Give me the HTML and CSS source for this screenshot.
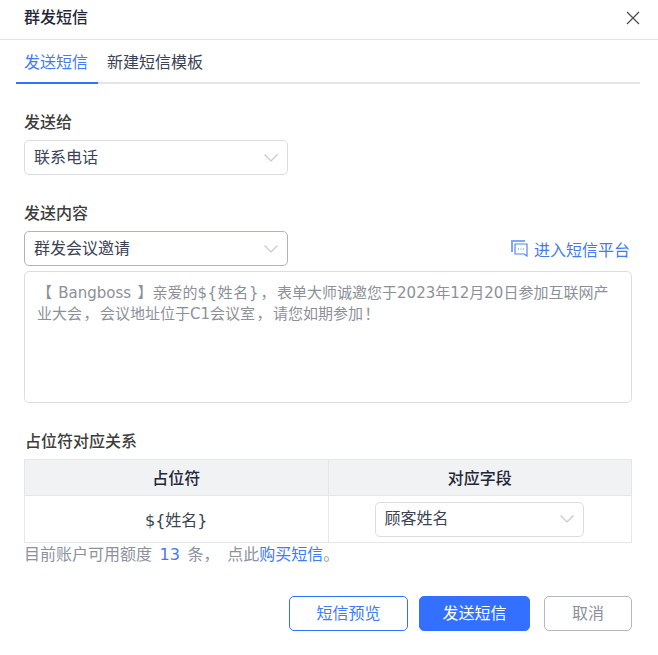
FILE: index.html
```html
<!DOCTYPE html>
<html lang="zh-CN">
<head>
    <meta charset="UTF-8">
    <title>群发短信</title>
    <link rel="stylesheet" href="styles.css">
</head>
<body>
    <div class="modal">
        <div class="modal-header">
            <span class="modal-title">群发短信</span>
            <svg class="close-icon" width="14" height="14" viewBox="0 0 14 14"><path d="M1 1l12 12M13 1L1 13" fill="none" stroke="#4a4a4a" stroke-width="1.2"/></svg>
        </div>
        <div class="tabs">
            <div class="tab active">发送短信</div>
            <div class="tab">新建短信模板</div>
        </div>
        <div class="form">
            <div class="label first-label">发送给</div>
            <div class="select select-short">
                <span>联系电话</span>
                <svg class="chevron" width="14" height="8" viewBox="0 0 14 8"><path d="M.5.5L7 7l6.5-6.5" fill="none" stroke="#c5c8ce" stroke-width="1.2"/></svg>
            </div>
            <div class="label content-label">发送内容</div>
            <div class="content-row">
                <div class="select select-short select-focus">
                    <span>群发会议邀请</span>
                    <svg class="chevron" width="14" height="8" viewBox="0 0 14 8"><path d="M.5.5L7 7l6.5-6.5" fill="none" stroke="#c5c8ce" stroke-width="1.2"/></svg>
                </div>
                <a class="platform-link">
                    <svg width="17" height="17" viewBox="0 0 17 17"><path d="M1 12V1h13" fill="none" stroke="#7ea6fb" stroke-width="2"/><path d="M4 4h12v12l-3-2H4z" fill="#fff" stroke="#4f86f7" stroke-width="1.2"/><path d="M7 9h1M9.5 9h1M12 9h1" stroke="#4f86f7" stroke-width="1"/></svg>
                    <span>进入短信平台</span>
                </a>
            </div>
            <div class="textarea">
                <div>【 Bangboss 】亲爱的<span class="var">${姓名}</span><span class="punct">，</span>表单大师诚邀您于2023年12月20日参加互联网产</div>
                <div>业大会<span class="punct">，</span>会议地址位于C1会议室<span class="punct">，</span>请您如期参加<span class="punct">！</span></div>
            </div>
            <div class="label table-label">占位符对应关系</div>
            <table class="map-table">
                <tr>
                    <th>占位符</th>
                    <th>对应字段</th>
                </tr>
                <tr>
                    <td>${姓名}</td>
                    <td>
                        <div class="select select-cell">
                            <span>顾客姓名</span>
                            <svg class="chevron" width="14" height="8" viewBox="0 0 14 8"><path d="M.5.5L7 7l6.5-6.5" fill="none" stroke="#c5c8ce" stroke-width="1.2"/></svg>
                        </div>
                    </td>
                </tr>
            </table>
            <div class="quota">目前账户可用额度 <span class="blue">13</span> 条<span class="punct">，</span> 点此<span class="blue">购买短信</span>。</div>
            <div class="actions">
                <button class="btn btn-outline">短信预览</button>
                <button class="btn btn-primary">发送短信</button>
                <button class="btn btn-cancel">取消</button>
            </div>
        </div>
    </div>
</body>
</html>
```

FILE: styles.css
```css
* {
    box-sizing: border-box;
}
body {
    margin: 0;
    background: #fff;
    font-family: "DejaVu Sans", "Noto Sans CJK SC", sans-serif;
    font-size: 16px;
    color: #3a4254;
}
.modal {
    width: 658px;
    height: 655px;
}
.modal-header {
    height: 40px;
    padding: 0 18px 4px 24px;
    border-bottom: 1px solid #e2e3e6;
    display: flex;
    align-items: center;
    justify-content: space-between;
}
.modal-title {
    margin-bottom: 3px;
    font-weight: 500;
    color: #1f2739;
}
.tabs {
    margin: 0 18px 0 16px;
    height: 44px;
    border-bottom: 2px solid #e4e5ec;
    display: flex;
}
.tab {
    padding: 0 8px;
    margin-right: 1px;
    height: 44px;
    line-height: 46px;
}
.tab.active {
    width: 82px;
    color: #3f7bf8;
    border-bottom: 2px solid #3370ff;
    margin-right: 1px;
}
.form {
    padding: 0 26px 0 24px;
}
.label {
    height: 22px;
    line-height: 24px;
    font-weight: 500;
    color: #3d3d3d;
    margin-bottom: 7px;
}
.first-label {
    margin-top: 27px;
}
.content-label {
    margin-top: 27px;
}
.table-label {
    margin-top: 27px;
    padding-left: 1px;
}
.select {
    height: 35px;
    border: 1px solid #dcdde1;
    border-radius: 5px;
    padding: 0 9px 4px;
    display: flex;
    align-items: center;
    justify-content: space-between;
}
.select-short {
    width: 264px;
}
.select-focus {
    border-color: #b1b3bd;
}
.select-cell {
    width: 209px;
    margin-left: 46px;
    text-align: left;
}
.chevron {
    margin-top: 4px;
}
.content-row {
    display: flex;
    justify-content: space-between;
    align-items: center;
}
.platform-link {
    display: flex;
    align-items: center;
    gap: 6px;
    color: #3f7bf8;
    margin-right: 2px;
}
.textarea {
    margin-top: 5px;
    height: 132px;
    border: 1px solid #dcdde1;
    border-radius: 5px;
    padding: 11px 12px;
    font-size: 15px;
    line-height: 21px;
    word-spacing: 1.5px;
    color: #8d9098;
}
.var {
    letter-spacing: .6px;
}
.punct {
    font-family: "DejaVu Sans", "Noto Sans CJK TC", sans-serif;
}
.textarea .punct {
    margin: 0 1.5px;
}
.map-table {
    width: 608px;
    border-collapse: collapse;
    table-layout: fixed;
}
.map-table th, .map-table td {
    border: 1px solid #e5e6e9;
    text-align: center;
    padding: 0;
}
.map-table th {
    height: 36px;
    padding-bottom: 2px;
    background: #f1f2f4;
    font-weight: 500;
    color: #1f2739;
}
.map-table td {
    height: 47px;
}
.quota {
    margin-top: 1px;
    line-height: 22px;
    word-spacing: 2.5px;
    color: #8c919d;
}
.blue {
    color: #3f7bf8;
}
.actions {
    margin-top: 30px;
    display: flex;
    justify-content: flex-end;
}
.btn {
    height: 35px;
    border-radius: 5px;
    font: inherit;
    padding: 0 0 4px;
}
.btn-outline {
    width: 119px;
    margin-right: 11px;
    background: #fff;
    color: #3f7bf8;
    border: 1px solid #3370ff;
}
.btn-primary {
    width: 111px;
    margin-right: 14px;
    background: #3370ff;
    color: #fff;
    border: 1px solid #3370ff;
}
.btn-cancel {
    width: 88px;
    background: #fff;
    color: #8c919d;
    border: 1px solid #b5b7c0;
}
```
